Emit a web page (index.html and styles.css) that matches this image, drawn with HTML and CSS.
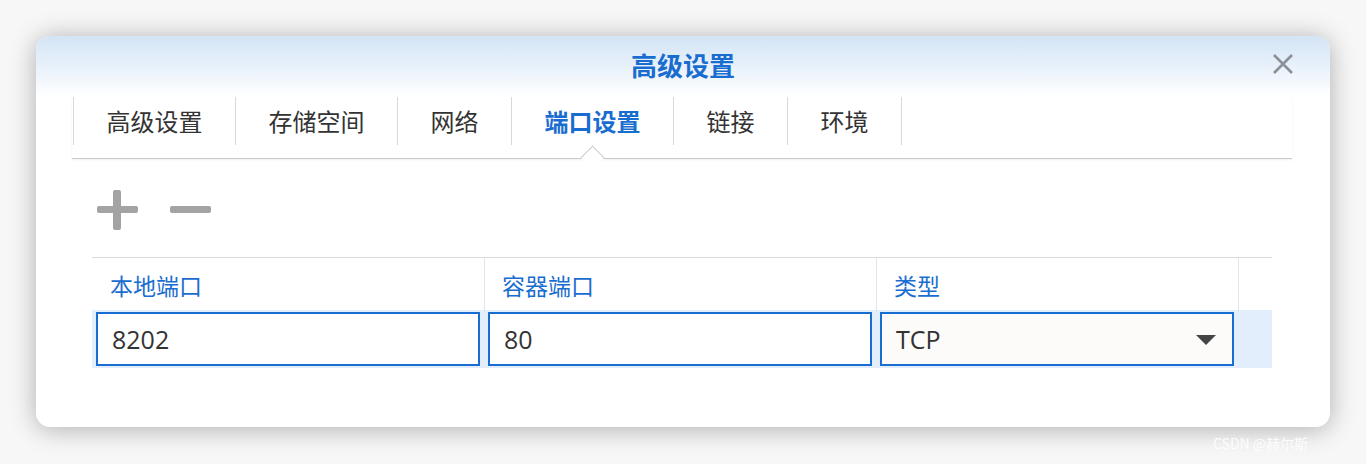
FILE: index.html
```html
<!DOCTYPE html>
<html lang="zh-CN">
<head>
<meta charset="utf-8">
<title>高级设置</title>
<link rel="stylesheet" href="styles.css">
</head>
<body>
<div class="dialog">
  <div class="header">
    <div class="title">高级设置</div>
    <button class="close" aria-label="关闭">
      <svg width="22" height="22" viewBox="0 0 22 22"><path d="M2 2 L20 20 M20 2 L2 20" stroke="#8b9096" stroke-width="2.6" stroke-linecap="butt" fill="none"/></svg>
    </button>
  </div>
  <div class="tabbar">
    <div class="tab">高级设置</div>
    <div class="tab">存储空间</div>
    <div class="tab">网络</div>
    <div class="tab active">端口设置<span class="caret"></span></div>
    <div class="tab">链接</div>
    <div class="tab last">环境</div>
  </div>
  <div class="content">
    <div class="toolbar">
      <span class="icon plus"></span>
      <span class="icon minus"></span>
    </div>
    <div class="table">
      <div class="thead">
        <div class="th">本地端口</div>
        <div class="th">容器端口</div>
        <div class="th">类型</div>
        <div class="th spacer"></div>
      </div>
      <div class="trow">
        <div class="field">8202</div>
        <div class="field">80</div>
        <div class="field select">TCP<span class="arrow"></span></div>
      </div>
    </div>
  </div>
</div>
<div class="watermark">CSDN @赫尔斯</div>
</body>
</html>
```
FILE: styles.css
```css
html, body {
  margin: 0;
  padding: 0;
}
body {
  background: #f7f7f7;
  padding: 36px;
  width: 1294px;
  height: 392px;
  font-family: "Open Sans", "Noto Sans CJK SC", sans-serif;
  position: relative;
  overflow: hidden;
}
.dialog {
  width: 1294px;
  height: 391px;
  background: #ffffff;
  border-radius: 14px;
  box-shadow: 0 2px 26px rgba(0, 0, 0, 0.30);
  display: flex;
  flex-direction: column;
  overflow: hidden;
}
.header {
  height: 61px;
  position: relative;
  display: flex;
  justify-content: center;
  background: linear-gradient(to bottom, #d3e4f5 0%, #e6f0fa 45%, #ffffff 100%);
}
.title {
  font-family: "Noto Sans CJK SC", sans-serif;
  font-weight: 700;
  font-size: 26px;
  line-height: 26px;
  color: #1a6dd0;
  padding-top: 16px;
}
.close {
  position: absolute;
  right: 36px;
  top: 17px;
  width: 22px;
  height: 22px;
  padding: 0;
  border: 0;
  background: transparent;
  display: flex;
}
.tabbar {
  margin: 0 38px 0 36px;
  padding-left: 1px;
  height: 61px;
  border-bottom: 1px solid #c9cbce;
  box-shadow: 0 1px 2px rgba(0, 0, 0, 0.06);
  display: flex;
  align-items: flex-start;
  position: relative;
}
.tab {
  height: 48px;
  padding: 0 32.5px;
  border-left: 1px solid #d6d9dd;
  font-family: "Noto Sans CJK SC", sans-serif;
  font-size: 24px;
  line-height: 48px;
  color: #333333;
  position: relative;
  white-space: nowrap;
}
.tab.last {
  border-right: 1px solid #d6d9dd;
}
.tab.active {
  color: #1a6dd0;
  font-weight: 700;
}
.caret {
  position: absolute;
  left: 50%;
  bottom: -21px;
  width: 16px;
  height: 16px;
  margin-left: -9px;
  background: #ffffff;
  border-top: 1px solid #c9cbce;
  border-left: 1px solid #c9cbce;
  transform: rotate(45deg);
}
.content {
  margin: 0 58px 0 56px;
  display: flex;
  flex-direction: column;
}
.toolbar {
  height: 98px;
  box-sizing: border-box;
  padding: 31px 0 0 5px;
  display: flex;
  gap: 32px;
}
.icon {
  width: 41px;
  height: 40px;
  position: relative;
  display: block;
}
.icon::before, .icon::after {
  content: "";
  position: absolute;
  background: #a3a3a3;
  border-radius: 2px;
}
.plus::before {
  left: 0;
  top: 16px;
  width: 41px;
  height: 7px;
}
.plus::after {
  left: 16px;
  top: 0;
  width: 8px;
  height: 40px;
}
.minus::before {
  left: 0;
  top: 16px;
  width: 41px;
  height: 7px;
}
.minus::after {
  display: none;
}
.table {
  border-top: 1px solid #d9dadc;
}
.thead {
  display: grid;
  grid-template-columns: 393px 392px 362px 1fr;
  height: 52px;
}
.th {
  border-right: 1px solid #e1e4e8;
  padding-left: 17px;
  font-family: "Noto Sans CJK SC", sans-serif;
  font-size: 23px;
  line-height: 54px;
  color: #1a6dd0;
}
.th:first-child {
  padding-left: 18px;
}
.th.spacer {
  border-right: 0;
}
.trow {
  display: grid;
  grid-template-columns: 384px 384px 354px;
  gap: 8px;
  padding: 2px 0 2px 4px;
  background: #e2eefb;
  height: 54px;
}
.field {
  box-sizing: border-box;
  height: 54px;
  border: 2px solid #1a6dd0;
  background: #ffffff;
  padding-left: 14px;
  font-size: 25px;
  line-height: 50px;
  color: #333333;
  position: relative;
}
.field.select {
  background: #fcfbf9;
}
.arrow {
  position: absolute;
  right: 16px;
  top: 21px;
  width: 0;
  height: 0;
  border-left: 10px solid transparent;
  border-right: 10px solid transparent;
  border-top: 10px solid #444444;
}
.watermark {
  position: absolute;
  left: 1213px;
  top: 433px;
  font-family: "Noto Sans CJK SC", sans-serif;
  font-size: 14px;
  color: rgba(255, 255, 255, 0.9);
  white-space: nowrap;
}
```
